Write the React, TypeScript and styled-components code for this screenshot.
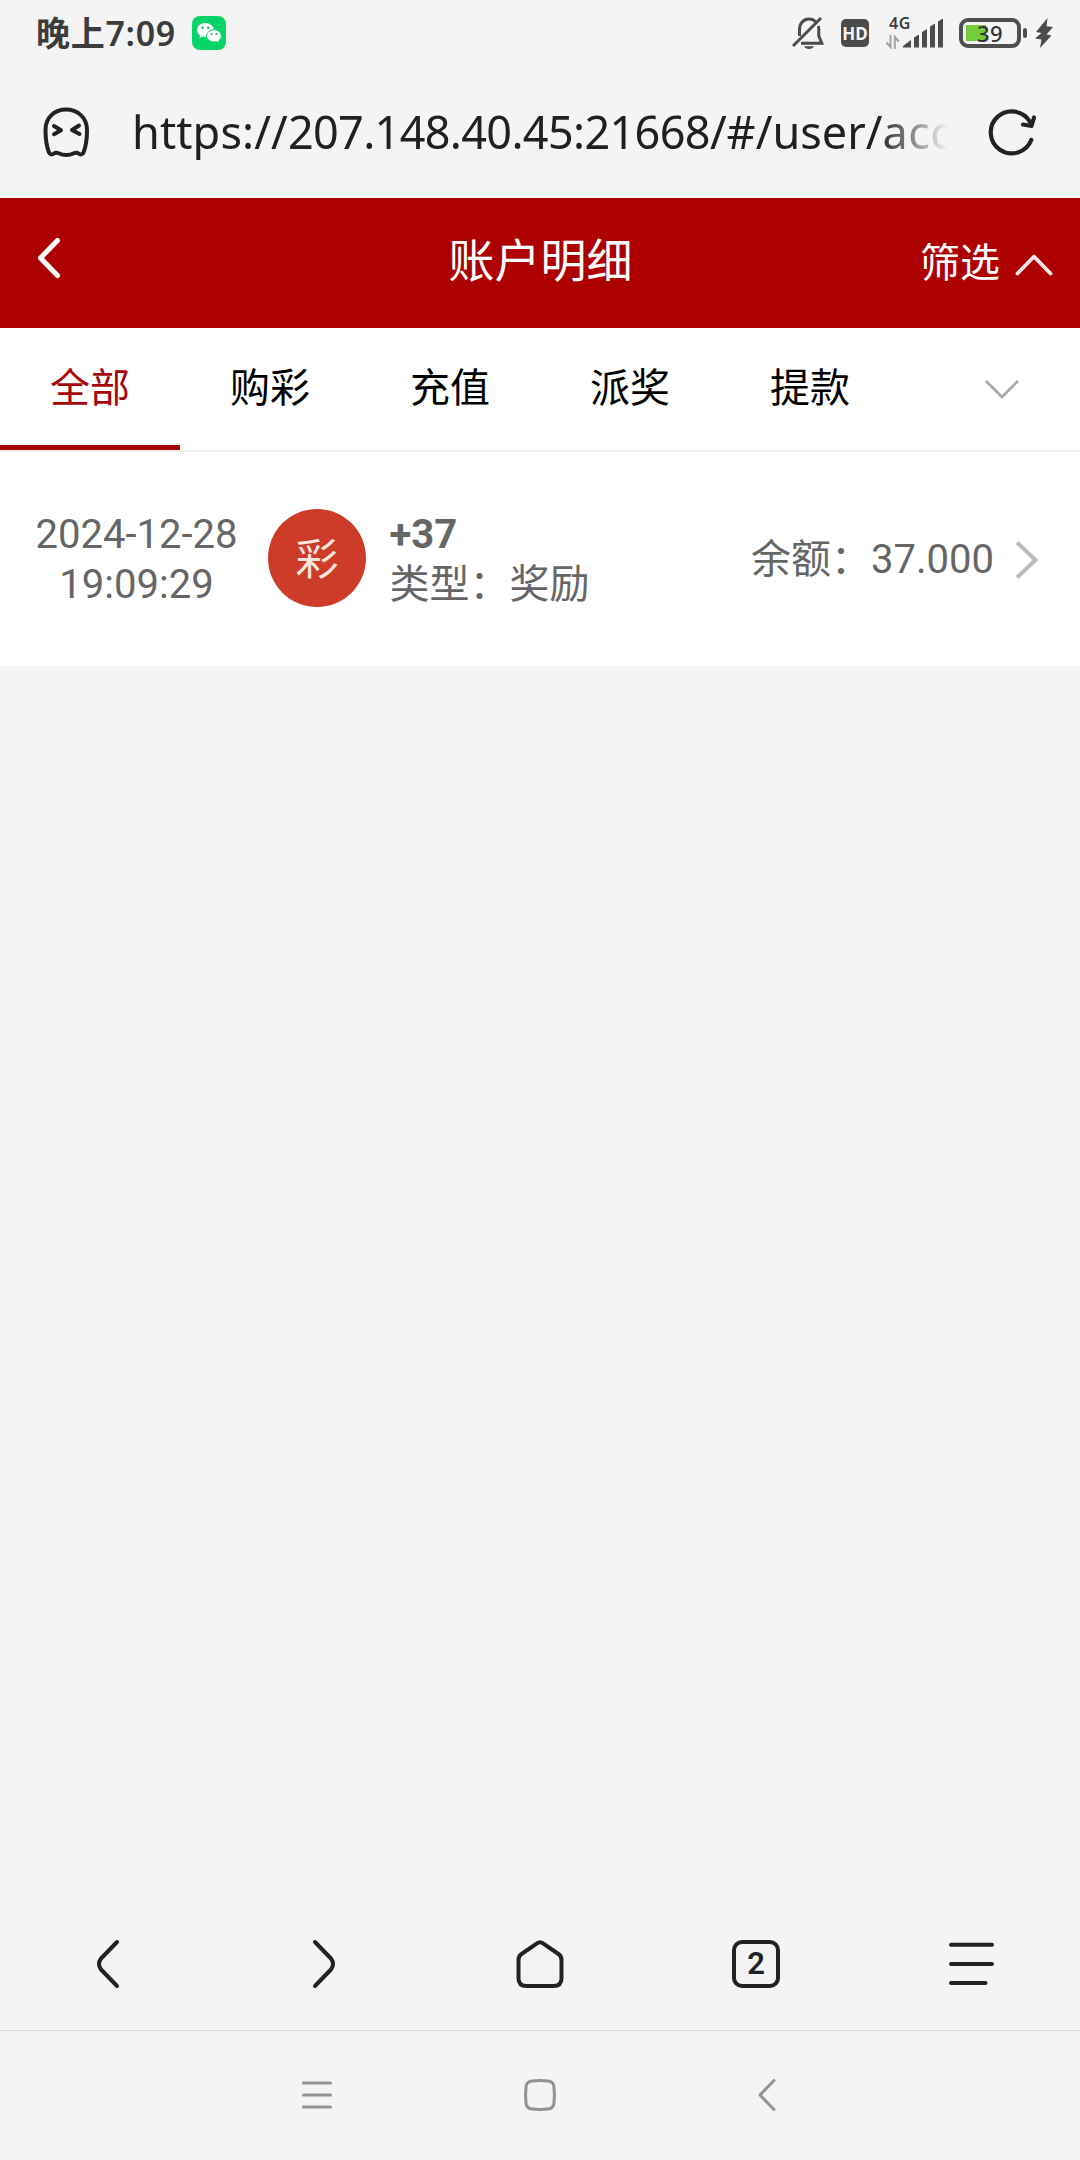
import React from 'react';
import styled, { createGlobalStyle } from 'styled-components';

const GlobalStyle = createGlobalStyle`
  * { box-sizing: border-box; }
  body { margin: 0; background: #f4f4f4; }
`;

const ui = `"Noto Sans", "Noto Sans CJK SC", sans-serif`;
const web = `Roboto, "Noto Sans CJK SC", sans-serif`;

const Screen = styled.div`
  width: 1080px;
  height: 2160px;
  display: flex;
  flex-direction: column;
  overflow: hidden;
  background: #f4f4f4;
  font-family: ${web};
`;

const StatusBar = styled.header`
  height: 66px;
  display: flex;
  justify-content: space-between;
  padding: 0 27px 0 36px;
  color: #3c3c3c;
`;

const StatusGroup = styled.div`
  height: 66px;
  display: flex;
  align-items: center;
`;

const Clock = styled.span`
  width: 156px;
  font: 600 34px/66px ${ui};
  letter-spacing: 0.7px;
  white-space: nowrap;
`;

const Glyph = styled.svg`
  display: block;
  flex: none;
  overflow: visible;
`;

const HdBadge = styled.span`
  width: 28px;
  height: 28px;
  margin: 0 0 0 17px;
  border-radius: 5px;
  background: #4b4b4b;
  color: #f4f4f4;
  font: 700 17px/29px ${ui};
  text-align: center;
`;

const Network = styled.div`
  display: flex;
  flex-direction: column;
  width: 17px;
  height: 32px;
  margin-left: 17px;
`;

const NetworkType = styled.span`
  padding-left: 3px;
  font: 600 16px/12px ${ui};
  letter-spacing: 0.5px;
`;

const ArrowSlot = styled.div`
  padding-top: 6px;
`;

const Battery = styled.div`
  width: 62px;
  height: 30px;
  margin-left: 15px;
  padding: 3px;
  border: 4px solid #4f4f4f;
  border-radius: 9px;
  background: linear-gradient(#76cd3a, #76cd3a) 3px 3px / 20px 16px no-repeat;
  color: #333;
  font: 500 22px/17px ${ui};
  letter-spacing: 0.5px;
  text-align: center;
`;

const BatteryTip = styled.i`
  width: 4px;
  height: 10px;
  margin: 0 8px 0 2px;
  border-radius: 2px;
  background: #4f4f4f;
`;

const AddressBar = styled.div`
  height: 132px;
  display: flex;
  align-items: center;
  padding: 0 43px;
`;

const Url = styled.div`
  width: 828px;
  margin: 0 29px 0 41px;
  color: #202020;
  font: 400 45px/64px ${ui};
  white-space: nowrap;
  mask-image: linear-gradient(90deg, #000 745px, transparent 816px);
`;

const UrlPart = styled.span<{ $track: number }>`
  letter-spacing: ${(p) => p.$track}px;
`;

const TitleBar = styled.div`
  height: 130px;
  display: grid;
  grid-template-columns: 1fr auto 1fr;
  align-items: center;
  padding: 0 28px 0 37px;
  background: #ad0000;
  color: #fff;
`;

const Title = styled.h1`
  margin: 0 8px 12px 0;
  font: 400 46px/64px "Noto Sans CJK SC", sans-serif;
`;

const BackButton = styled.div`
  padding-bottom: 10px;
`;

const Filter = styled.div`
  display: flex;
  align-items: center;
  justify-content: flex-end;
  gap: 16px;
  margin-bottom: 6px;
  font: 400 40px/60px "Noto Sans CJK SC", sans-serif;
`;

const FilterArrow = styled.span`
  padding-top: 9px;
`;

const TabRow = styled.nav`
  height: 124px;
  display: flex;
  align-items: stretch;
  border-bottom: 2px solid #f1f1f1;
  background: #fff;
`;

const Tab = styled.div<{ $active?: boolean }>`
  width: 180px;
  border-bottom: 5px solid ${(p) => (p.$active ? '#a50508' : 'transparent')};
  color: ${(p) => (p.$active ? '#a50508' : '#000')};
  font: 400 40px/115px "Noto Sans CJK SC", sans-serif;
  text-align: center;
`;

const TabMore = styled.div`
  flex: 1;
  display: flex;
  justify-content: center;
  padding: 52px 0 0 23px;
`;

const Record = styled.section`
  height: 214px;
  display: flex;
  align-items: flex-start;
  padding: 57px 42px 0 34px;
  background: #fff;
  color: #666;
  font-size: 40px;
  line-height: 50px;
  white-space: nowrap;
`;

const RecordTime = styled.div`
  width: 205px;
  padding-top: 1px;
  text-align: center;
`;

const Badge = styled.div`
  width: 98px;
  height: 98px;
  margin: 0 23.5px 0 29px;
  border-radius: 50%;
  background: #cd3b29;
  color: #fbe4de;
  font: 400 43px/94px "Noto Sans CJK SC", sans-serif;
  text-align: center;
`;

const RecordInfo = styled.div`
  flex: 1;
  padding-top: 1px;
`;

const Amount = styled.div`
  font-weight: 700;
`;

const Balance = styled.div`
  height: 101px;
  display: flex;
  align-items: center;
  gap: 22px;
`;

const BalanceText = styled.span`
  padding-top: 1px;
`;

const Page = styled.main`
  flex: 1;
`;

const Toolbar = styled.footer`
  height: 132px;
  display: grid;
  grid-template-columns: repeat(5, 1fr);
  place-items: center;
  padding-bottom: 1px;
  border-bottom: 1px solid #d9d9d9;
`;

const TabCount = styled.span`
  width: 48px;
  height: 48px;
  border: 4px solid #222;
  border-radius: 10px;
  color: #222;
  font: 600 31px/39px Roboto, sans-serif;
  text-align: center;
`;

const SystemNav = styled.footer`
  height: 129px;
  display: grid;
  grid-template-columns: 30px 32px 18px;
  column-gap: 192px;
  align-items: center;
  padding: 0 0 1px 302px;
`;

const NavBack = styled.div`
  padding-left: 10px;
`;

const ink = { fill: 'none', stroke: '#222', strokeWidth: 4, strokeLinecap: 'round', strokeLinejoin: 'round' } as const;
const grey = { ...ink, stroke: '#929292', strokeWidth: 3 } as const;

const WeChat = () => (
  <Glyph width="34" height="34" viewBox="0 0 34 34">
    <rect width="34" height="34" rx="8" fill="#07d467" />
    <path d="M13.400 7C8.700 7 5 10.100 5 14c0 2.200 1.200 4.200 3.100 5.500L7.500 22l3.100-1.500c.9.300 1.900.4 2.800.4C18 20.900 21.800 17.800 21.800 14S18 7 13.400 7z" fill="#fff" />
    <path d="M22 13.800c-4.100 0-7.400 2.700-7.400 6.100S17.900 26 22 26c.9 0 1.700-.1 2.500-.4l2.900 1.500-.6-2.600c1.600-1.100 2.600-2.800 2.600-4.600 0-3.400-3.300-6.100-7.400-6.100z" fill="#fff" stroke="#07d467" strokeWidth="1" />
    <g fill="#07b95a">
      <circle cx="10.500" cy="11.800" r="1.200" /><circle cx="16.200" cy="11.800" r="1.200" />
      <circle cx="19.600" cy="18" r="1" /><circle cx="24.400" cy="18" r="1" />
    </g>
  </Glyph>
);

const MutedBell = () => (
  <Glyph width="32" height="32" viewBox="0 0 32 32" fill="none" stroke="#4b4b4b" strokeWidth="3">
    <path d="M7.500 19V12.500C7.500 6.500 11.500 2 17 2c2.800 0 5 1 6.500 2.700M26.300 9c.4 1.100.5 2.200.5 3.500v6.500l3 7.300H9" />
    <path d="M1 29 29 1" />
    <path d="M12 29.300h10c-1 1.700-2.800 2.700-5 2.700s-4-1-5-2.700z" fill="#4b4b4b" stroke="none" />
  </Glyph>
);

const DataArrows = () => (
  <Glyph width="14" height="14" viewBox="0 0 14 14" fill="none" stroke="#a3a3a3" strokeWidth="2">
    <path d="M4.500 0v12L.5 7.500M8.800 14V2l4 4.500" />
  </Glyph>
);

const Signal = () => (
  <Glyph width="41" height="30" viewBox="0 0 41 30" fill="#4b4b4b">
    <path d="M0 29.500V28l8-6v7.500zM11 19.500l5-3v13h-5zM19 14l5-3v18.500h-5zM27 8.500l5-3v24h-5zM35 3.500l5-3v29h-5z" />
  </Glyph>
);

const Bolt = () => (
  <Glyph width="18" height="30" viewBox="0 0 18 30" fill="#4b4b4b">
    <path d="M12.500 0 1 14l5.500 1L0 20.500l6.500 1L5 30l11.500-12.500-5-1L18 9l-6.500-.8z" />
  </Glyph>
);

const Ghost = () => (
  <Glyph width="48" height="50" viewBox="0 0 48 50" {...ink} strokeWidth={4}>
    <path d="M2.500 23C2.500 10 12 2.500 23 2.500S44 10 44 23c0 9-1 16-3.300 22-1 2.800-3.300 3-5.200 1.500-1.500-1.200-3-1-4.500-.3-5.500 2.600-10 2.600-15.500 0-1.500-.7-3-.9-4.500.3-2 1.500-4.200 1.300-5.200-1.500C3.500 39 2.500 32 2.500 23z" />
    <path d="m11 19 7 4.200-7 4M36 18.500l-7 4.500 7.500 4" />
  </Glyph>
);

const Reload = () => (
  <Glyph width="48" height="48" viewBox="0 0 48 48" {...ink} strokeWidth={4.200}>
    <path d="M42.300 32A21 21 0 1 1 41 14" />
    <path d="M34 16.500l8.500 1.500 2.500-8.500" />
  </Glyph>
);

const Home = () => (
  <Glyph width="48" height="48" viewBox="0 0 48 48" {...ink}>
    <path d="M21 3.300a5 5 0 0 1 6 0L42.500 14Q45.500 16 45.500 20v18q0 8-8 8h-27q-8 0-8-8V20q0-4 3-6z" />
  </Glyph>
);

const tabs = ['全部', '购彩', '充值', '派奖', '提款'];

export default function App() {
  return (
    <Screen>
      <GlobalStyle />
      <StatusBar>
        <StatusGroup>
          <Clock>晚上7:09</Clock>
          <WeChat />
        </StatusGroup>
        <StatusGroup>
          <MutedBell />
          <HdBadge>HD</HdBadge>
          <Network>
            <NetworkType>4G</NetworkType>
            <ArrowSlot><DataArrows /></ArrowSlot>
          </Network>
          <Signal />
          <Battery>39</Battery>
          <BatteryTip />
          <Bolt />
        </StatusGroup>
      </StatusBar>

      <AddressBar>
        <Ghost />
        <Url>
          <UrlPart $track={0.1}>https://</UrlPart>
          <UrlPart $track={-0.65}>207.148.40.45:21668</UrlPart>
          <UrlPart $track={0}>/#/user/</UrlPart>
          <UrlPart $track={0.5}>acc</UrlPart>
        </Url>
        <Reload />
      </AddressBar>

      <TitleBar>
        <BackButton>
          <Glyph width="24" height="40" viewBox="0 0 24 40" {...ink} stroke="#fff" strokeWidth={5}>
            <path d="M20.500 2.500 3.500 20l17 17.500" />
          </Glyph>
        </BackButton>
        <Title>账户明细</Title>
        <Filter>
          筛选
          <FilterArrow>
            <Glyph width="36" height="21" viewBox="0 0 36 21" {...ink} stroke="#ffe6e6" strokeWidth={3.800}>
              <path d="M1.500 19.500 18 2.500l16.500 17" />
            </Glyph>
          </FilterArrow>
        </Filter>
      </TitleBar>

      <TabRow>
        {tabs.map((name, i) => (
          <Tab key={name} $active={i === 0}>{name}</Tab>
        ))}
        <TabMore>
          <Glyph width="34" height="19" viewBox="0 0 34 19" {...ink} stroke="#aaa" strokeWidth={2.800} strokeLinecap="butt">
            <path d="M1 1l16 16L33 1" />
          </Glyph>
        </TabMore>
      </TabRow>

      <Record>
        <RecordTime>2024-12-28<br />19:09:29</RecordTime>
        <Badge>彩</Badge>
        <RecordInfo>
          <Amount>+37</Amount>
          <div>类型：奖励</div>
        </RecordInfo>
        <Balance>
          <BalanceText>余额：37.000</BalanceText>
          <Glyph width="22" height="38" viewBox="0 0 22 38" {...ink} stroke="#bcbcbc" strokeWidth={4} strokeLinecap="butt" strokeLinejoin="miter">
            <path d="M1 1.500l18.500 17.500L1 36.500" />
          </Glyph>
        </Balance>
      </Record>

      <Page />

      <Toolbar>
        <Glyph width="22" height="48" viewBox="0 0 22 48" {...ink}>
          <path d="M20 2 4 18.500q-4 5.500 0 11L20 46" />
        </Glyph>
        <Glyph width="22" height="48" viewBox="0 0 22 48" {...ink}>
          <path d="M2 2l16 16.500q4 5.500 0 11L2 46" />
        </Glyph>
        <Home />
        <TabCount>2</TabCount>
        <Glyph width="46" height="48" viewBox="0 0 46 48" {...ink}>
          <path d="M2 4.800h41M2 24h41M2 43h34.500" />
        </Glyph>
      </Toolbar>

      <SystemNav>
        <Glyph width="30" height="32" viewBox="0 0 30 32" {...grey}>
          <path d="M1.500 4h27M1.500 16h27M1.500 28h27" />
        </Glyph>
        <Glyph width="32" height="32" viewBox="0 0 32 32" {...grey}>
          <path d="M8 2q8-.8 16 0 5.500.5 6 6 .8 8 0 16-.5 5.500-6 6-8 .8-16 0-5.500-.5-6-6-.8-8 0-16 .5-5.500 6-6z" />
        </Glyph>
        <NavBack>
          <Glyph width="18" height="32" viewBox="0 0 18 32" {...grey}>
            <path d="M16 1.500 2 16l14 14.500" />
          </Glyph>
        </NavBack>
      </SystemNav>
    </Screen>
  );
}
